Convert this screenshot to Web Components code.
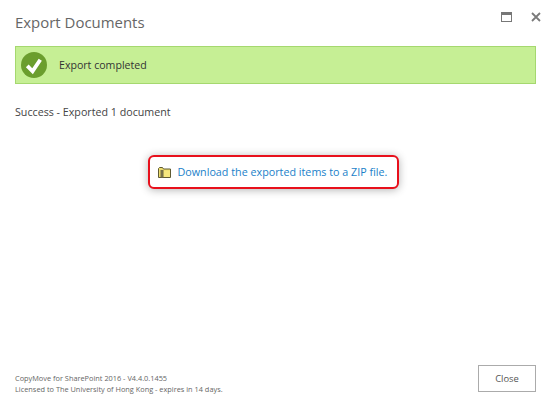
<!DOCTYPE html>
<html><head><meta charset="utf-8"><title>Export Documents</title>
<style>html,body{margin:0;padding:0;background:#fff}body{font-family:"Open Sans","Noto Sans",sans-serif}</style>
</head><body>
<export-dialog>
  <span slot="title">Export Documents</span>
  <status-banner>Export completed</status-banner>
  <p slot="summary">Success - Exported 1 document</p>
  <download-link>Download the exported items to a ZIP file.</download-link>
  <span slot="product">CopyMove for SharePoint 2016 - V4.4.0.1455</span>
  <span slot="license">Licensed to The University of Hong Kong - expires in 14 days.</span>
</export-dialog>
<script>
class ExportDialog extends HTMLElement{constructor(){super();this.attachShadow({mode:'open'}).innerHTML=`
<style>
:host{display:flex;flex-direction:column;width:553px;height:400px;box-sizing:border-box;padding:0 17px 4px 15px;overflow:hidden}
header{display:flex;align-items:flex-start;justify-content:space-between;height:46px;flex:none}
.title{font-size:14.95px;line-height:22px;color:#666;margin-top:11px}
.ctrls{display:flex;gap:19px;margin:12px -5px 0 0}
.ctrls svg{display:block}
.sum{margin-top:20px;font-size:10.7px;line-height:16px;color:#444}
::slotted(p){margin:0}
.mid{margin-top:35px;display:flex;justify-content:center;padding-right:5px}
main{flex:1}
footer{display:flex;justify-content:space-between;align-items:flex-end}
.legal{display:flex;flex-direction:column;font-size:7.37px;line-height:10.5px;color:#666;padding-bottom:2px}
button{width:58px;height:27px;box-sizing:border-box;margin-bottom:4px;background:#fff;border:1px solid #ababab;border-radius:0;font:inherit;font-size:9.4px;color:#555;padding:0}
</style>
<header><div class="title"><slot name="title"></slot></div>
<div class="ctrls">
<svg width="11" height="10" viewBox="0 0 11 10"><rect x=".5" y=".5" width="10" height="9" fill="none" stroke="#777"/><rect x="1" y="1" width="9" height="2" fill="#777"/></svg>
<svg width="10" height="10" viewBox="0 0 10 10"><path d="M1 1 9 9M9 1 1 9" stroke="#7a7a7a" stroke-width="1.8" fill="none"/></svg>
</div></header>
<main><slot name="banner"></slot>
<div class="sum"><slot name="summary"></slot></div>
<div class="mid"><slot name="link"></slot></div>
</main>
<footer><div class="legal"><slot name="product"></slot><slot name="license"></slot></div><button>Close</button></footer>`;
}
connectedCallback(){this.querySelector('status-banner').slot='banner';this.querySelector('download-link').slot='link';}
}
class StatusBanner extends HTMLElement{constructor(){super();this.attachShadow({mode:'open'}).innerHTML=`
<style>
:host{display:flex;align-items:center;height:38px;box-sizing:border-box;background:#c6ef95;border:1px solid #a5d86f;padding-left:5px;gap:12px;font-size:10.6px;color:#333}
svg{display:block;flex:none}
</style>
<svg width="26" height="26" viewBox="0 0 27 27"><circle cx="13.5" cy="13.5" r="13.5" fill="#6b9e2e"/><path d="M6.5 14.5 12 20 20 8" fill="none" stroke="#fff" stroke-width="4"/></svg>
<slot></slot>`;}}
class DownloadLink extends HTMLElement{constructor(){super();this.attachShadow({mode:'open'}).innerHTML=`
<style>
:host{display:flex;align-items:center;gap:7px;box-sizing:border-box;width:251px;height:34px;padding-left:8px;border:2px solid #e8101c;border-radius:6px;box-shadow:0 1px 8px rgba(0,0,0,.3);background:#fff;font-size:10.75px;color:#1a7fc9;white-space:nowrap}
svg{display:block;flex:none}
</style>
<svg width="13" height="11" viewBox="0 0 13 11"><path d="M.5 1.5l1-1h3l1 1.5h7v8.5H.5z" fill="#ecdc6e" stroke="#5f5a33"/><rect x="2.5" y="3" width="3" height="7.5" fill="#77714a"/><rect x="6" y="3.5" width="6" height="6.5" fill="#f6e77e"/></svg>
<slot></slot>`;}}
customElements.define('status-banner',StatusBanner);
customElements.define('download-link',DownloadLink);
customElements.define('export-dialog',ExportDialog);
</script>
</body></html>
